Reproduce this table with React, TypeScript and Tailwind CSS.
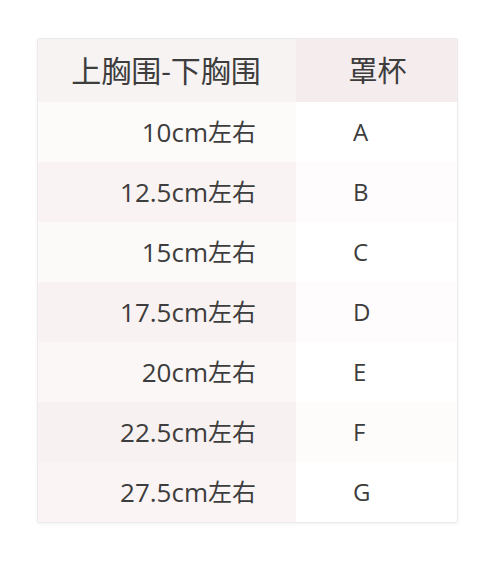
const rows = [
  { size: '10cm', cup: 'A', left: 'bg-[#fdfafa]', right: 'bg-white' },
  { size: '12.5cm', cup: 'B', left: 'bg-[#f9f3f3]', right: 'bg-[#fefcfc]' },
  { size: '15cm', cup: 'C', left: 'bg-[#fcf9f9]', right: 'bg-white' },
  { size: '17.5cm', cup: 'D', left: 'bg-[#f9f2f2]', right: 'bg-[#fefcfc]' },
  { size: '20cm', cup: 'E', left: 'bg-[#fbf7f7]', right: 'bg-white' },
  { size: '22.5cm', cup: 'F', left: 'bg-[#f8f1f1]', right: 'bg-[#fefcfb]' },
  { size: '27.5cm', cup: 'G', left: 'bg-[#fbf4f5]', right: 'bg-white' },
];

export default function App() {
  return (
    <div
      className="w-[500px] h-[576px] bg-white pt-[38px] pl-[37px] text-[#3d3d3d]"
      style={{ fontFamily: '"Open Sans", "Noto Sans CJK SC", sans-serif' }}
    >
      <div className="w-[421px] border border-[#ebebeb] rounded-[2px] shadow-[0_1px_3px_rgba(0,0,0,0.06)] overflow-hidden">
        <div className="flex h-[63px]">
          <div className="w-[258px] bg-[#f7f3f3] flex items-center justify-center text-[30px] pr-[2px]">
            上胸围-下胸围
          </div>
          <div className="flex-1 bg-[#f5eced] flex items-center justify-center text-[29px] pl-[2px]">
            罩杯
          </div>
        </div>
        {rows.map((r) => (
          <div key={r.cup} className="flex h-[60px]">
            <div className={`w-[258px] ${r.left} flex items-center justify-end pr-[40px] text-[26px]`}>
              {r.size}
              <span className="text-[24px]">左右</span>
            </div>
            <div className={`flex-1 ${r.right} flex items-center pl-[57px] text-[24px]`}>
              {r.cup}
            </div>
          </div>
        ))}
      </div>
    </div>
  );
}
